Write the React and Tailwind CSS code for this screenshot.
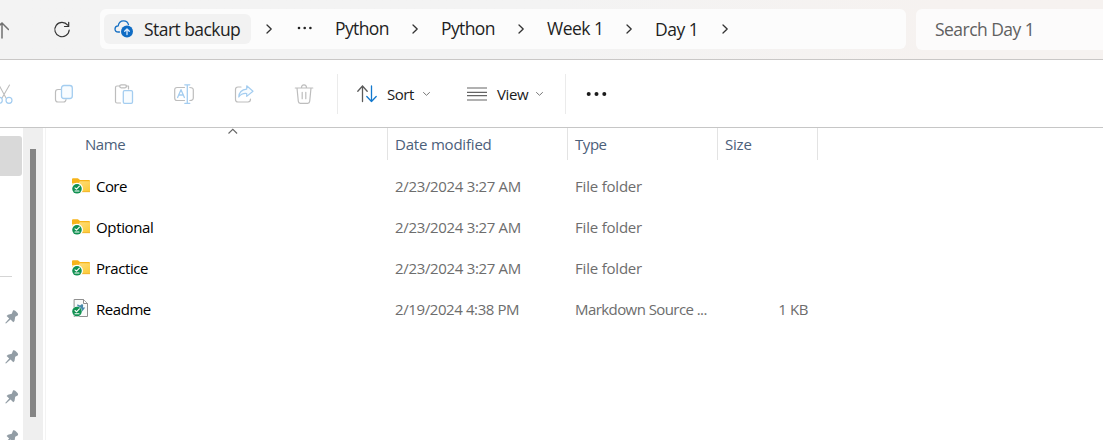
import React from "react";

const crumbs = [
  { label: "Python", width: "w-[77px]", track: "tracking-[-0.6px]" },
  { label: "Python", width: "w-[77px]", track: "tracking-[-0.6px]" },
  { label: "Week 1", width: "w-[79px]", track: "tracking-[-0.5px]" },
  { label: "Day 1", width: "w-[67px] pt-px", track: "tracking-[-0.5px]" },
];

const rows = [
  { name: "Core", date: "2/23/2024 3:27 AM", type: "File folder", size: "", nt: "tracking-[-0.55px]", dt: "tracking-[-0.33px]", tt: "tracking-[-0.2px]" },
  { name: "Optional", date: "2/23/2024 3:27 AM", type: "File folder", size: "", nt: "tracking-[-0.35px]", dt: "tracking-[-0.33px]", tt: "tracking-[-0.2px]" },
  { name: "Practice", date: "2/23/2024 3:27 AM", type: "File folder", size: "", nt: "tracking-[-0.42px]", dt: "tracking-[-0.33px]", tt: "tracking-[-0.2px]" },
  { name: "Readme", date: "2/19/2024 4:38 PM", type: "Markdown Source ...", size: "1 KB", file: true, nt: "tracking-[-0.45px]", dt: "tracking-[-0.4px]", tt: "tracking-[-0.57px]" },
];

function Svg({ w = 20, h = 20, className = "", children }) {
  return (
    <svg width={w} height={h} viewBox={`0 0 ${w} ${h}`} fill="none" strokeLinecap="round" strokeLinejoin="round" className={`block shrink-0 ${className}`}>
      {children}
    </svg>
  );
}

function ChevronRight() {
  return (
    <Svg w={8} h={12}>
      <path d="M1 2 5.200 6 1 10" stroke="#333" strokeWidth="1.300" />
    </Svg>
  );
}

function ChevronDown() {
  return (
    <Svg w={8} h={6}>
      <path d="M.5 1.500 3.500 4.300 6.500 1.500" stroke="#777" strokeWidth="1" />
    </Svg>
  );
}

function Badge() {
  return (
    <>
      <circle cx="5" cy="10.800" r="5.200" fill="#fff" />
      <circle cx="5" cy="10.800" r="4.800" fill="#129152" />
      <path d="M3 9.800 4.500 11.100 7.400 8.200M3 13h4" stroke="#fff" strokeWidth="1.100" />
    </>
  );
}

function FolderIcon() {
  return (
    <Svg w={18} h={16}>
      <defs>
        <linearGradient id="folder" x1="0" y1="0" x2="1" y2="1">
          <stop offset="0" stopColor="#ffe28a" />
          <stop offset="1" stopColor="#fbc833" />
        </linearGradient>
      </defs>
      <path d="M0 1.200Q0 .3 1 .3h4.600q.7 0 1.200.6L8 2.100h9q1 0 1 1V8H0z" fill="#f7b41a" />
      <path d="M0 5h6.400l1.500-1.700H18v10.200q0 .5-.7.5H.7Q0 14 0 13.300z" fill="url(#folder)" />
      <path d="M8 13.700h9.700" stroke="#efb02a" strokeWidth=".8" />
      <circle cx="5" cy="10.800" r="6" fill="#fff" />
      <Badge />
    </Svg>
  );
}

function MarkdownIcon() {
  return (
    <Svg w={18} h={19}>
      <path d="M2.500.5h9L15.500 4.500v13h-13z" fill="#fafafa" stroke="#909090" />
      <path d="M11.500.8v3.700h3.700" stroke="#909090" fill="#fff" />
      <path d="m5.500 5.200 2.500 1.300 2-1.400 1.200.9-.3 2.500h2.300l-3 4-2.500-3-2.700-.9z" fill="#4889aa" />
      <g transform="translate(0 1.700)">
        <Badge />
      </g>
    </Svg>
  );
}

function PinIcon() {
  return (
    <Svg w={14} h={14}>
      <path d="M8 .6c.7-.5 1.700-.3 2.500.4l2 2.100c.8.9.8 2 .1 2.500l-2.400 1.200-.7 4.300-1.200 1.200-2.800-2.900L1 13.400l-.8-.5 4-4.500-2.600-2.500L3 4.700l3.800-1z" fill="#929da5" />
    </Svg>
  );
}

function CloudIcon() {
  return (
    <Svg w={20} h={20}>
      <path d="M5.500 13H4.300C2.300 13 1 11.700 1 10c0-1.800 1.300-3 3.200-3.100C4.600 3.900 6.700 1.800 9.600 1.800c2.500 0 4.300 1.400 4.900 3.900" stroke="#1670c4" strokeWidth="1.300" />
      <circle cx="13" cy="12.600" r="6" fill="#0f6cc4" />
      <path d="M13 15.500v-5.400m-2.300 2.200L13 10l2.300 2.300" stroke="#dcecff" strokeWidth="1.300" />
    </Svg>
  );
}

function Tools() {
  const g = "#bdbdbd";
  const b = "#a4cdf0";
  return (
    <>
      <Svg className="-ml-[6px]">
        <path d="M5 1 12 14M15.500 1 8 14" stroke={g} strokeWidth="1.100" />
        <circle cx="5.300" cy="16.300" r="3" stroke={b} strokeWidth="1.200" />
        <circle cx="15" cy="16.300" r="3" stroke={b} strokeWidth="1.200" />
      </Svg>
      <Svg className="ml-10">
        <path d="M6.500 5.500H4Q1.500 5.500 1.500 8v7.500Q1.500 18 4 18h5.500q2 0 2.500-2.400" stroke={g} strokeWidth="1.200" />
        <rect x="7.500" y="1.500" width="10.800" height="13" rx="2.500" stroke={b} strokeWidth="1.300" fill="#f8fcff" />
      </Svg>
      <Svg className="ml-10">
        <path d="M5.800 2H3Q1.500 2 1.500 3.500v14Q1.500 19 3 19h3.500M12 2h2.500v3" stroke={g} strokeWidth="1.200" />
        <rect x="5.700" y=".8" width="6.800" height="3" rx="1.500" stroke={g} strokeWidth="1.200" />
        <rect x="9.300" y="6.700" width="9.200" height="12.600" rx="1.300" stroke={b} strokeWidth="1.300" fill="#f8fcff" />
      </Svg>
      <Svg className="ml-10">
        <path d="M10.500 3.500H3Q.7 3.500.7 6v8q0 2.500 2.300 2.500h7.500M15.800 3.500q3.500 0 3.500 2.500v8q0 2.500-3.500 2.500" stroke={g} strokeWidth="1.200" />
        <path d="M3.600 13.500 7 5.700l3.400 7.800M4.600 11h4.800M13.300 1v18.200M10.800.8h5M10.800 19.300h5" stroke={b} strokeWidth="1.300" />
      </Svg>
      <Svg className="ml-10">
        <path d="M7 3H4Q1.500 3 1.500 5.500v10Q1.500 18 4 18h10q2.500 0 2.500-3" stroke={g} strokeWidth="1.200" />
        <path d="M12.700 1.800 19 7.200l-6.300 5.200V9.500C8.800 9.200 6.600 10.300 4.800 13c.2-4.400 3.200-7.500 7.900-7.900z" stroke={b} strokeWidth="1.200" fill="#f8fcff" />
      </Svg>
      <Svg className="ml-10">
        <path d="M1.300 4h17.500M3 4l1.300 13.300Q4.500 19.300 6.300 19.300h7.400q1.800 0 2-2L17 4M7.500 3.700Q7.500.8 10 .8t2.500 2.900M8.200 8.300v6.400M11.800 8.300v6.400" stroke={g} strokeWidth="1.200" />
      </Svg>
    </>
  );
}

function MoreDots({ small }) {
  return small ? (
    <Svg w={16} h={4}>
      <circle cx="2" cy="2" r="1.300" fill="#222" />
      <circle cx="7.700" cy="2" r="1.300" fill="#222" />
      <circle cx="13.400" cy="2" r="1.300" fill="#222" />
    </Svg>
  ) : (
    <Svg w={22} h={6}>
      <circle cx="2.700" cy="3" r="2" fill="#1b1b1b" />
      <circle cx="10.500" cy="3" r="2" fill="#1b1b1b" />
      <circle cx="18.300" cy="3" r="2" fill="#1b1b1b" />
    </Svg>
  );
}

function AddressBar() {
  return (
    <header className="flex h-[60px] shrink-0 items-start border-b border-[#c9c7c6] bg-linear-to-r from-[#f3f3f3] from-50% to-[#f6f2f0] to-85% text-[17.5px] text-[#1f1f1f]">
      <div className="flex h-[59px] w-[100px] items-center">
        <Svg w={12} h={20} className="-ml-[3px]">
          <path d="M5 18V3M-2 9.500 5 3l6.500 6.500" stroke="#707070" strokeWidth="1.500" />
        </Svg>
        <Svg w={18} h={18} className="ml-[44px]">
          <path d="M14.700 4.100A7.200 7.200 0 1 0 16.200 9M15.700 1.300v4.200h-4.200" stroke="#333" strokeWidth="1.200" />
        </Svg>
      </div>
      <nav className="mt-[9px] flex h-10 w-[806px] shrink-0 items-center rounded-md bg-[#fcfcfc] pl-1">
        <div className="flex h-[30px] w-[147px] shrink-0 items-center rounded-md bg-[#f2f2f2] pl-[10px]">
          <CloudIcon />
          <span className="ml-[10px] tracking-[-0.56px] whitespace-nowrap">Start backup</span>
        </div>
        <div className="ml-[15px] flex w-[31px]"><ChevronRight /></div>
        <div className="flex w-[38px] pb-[3px]"><MoreDots small /></div>
        {crumbs.map((c, i) => (
          <div key={i} className="flex items-center">
            <span className={`${c.width} ${c.track} -mt-px whitespace-nowrap`}>{c.label}</span>
            <div className="w-[29px]"><ChevronRight /></div>
          </div>
        ))}
      </nav>
      <div className="mt-[9px] ml-[10px] flex h-[41px] flex-1 items-center rounded-l-md bg-[#fcfbfb] pl-[19px] text-[#606060]">
        <span className="tracking-[-0.54px] whitespace-nowrap">Search Day 1</span>
      </div>
    </header>
  );
}

function Toolbar() {
  return (
    <div className="flex h-[68px] shrink-0 items-center border-b border-[#c6c6c6] bg-white text-[15px] text-[#1b1b1b]">
      <Tools />
      <div className="ml-[23px] h-10 w-px bg-[#ebebeb]" />
      <Svg className="ml-[19px]">
        <path d="M5.500 17.500V2M.8 7.200 5.500 2l4.700 5.200" stroke="#5b5b5b" strokeWidth="1.300" />
        <path d="M14.500 2v15.500M9.800 12.500l4.700 5 4.700-5" stroke="#1379ce" strokeWidth="1.300" />
      </Svg>
      <span className="mt-[2px] ml-[10px] w-9 tracking-[-0.45px]">Sort</span>
      <ChevronDown />
      <Svg className="ml-[36px]">
        <path d="M0 4h20M0 8.300h20M0 11.700h20M0 16h20" stroke="#646464" strokeWidth="1.200" />
      </Svg>
      <span className="mt-[2px] ml-[10px] w-[39px] tracking-[-0.4px]">View</span>
      <ChevronDown />
      <div className="ml-[21px] h-10 w-px bg-[#ebebeb]" />
      <div className="ml-[20px] pt-px"><MoreDots /></div>
    </div>
  );
}

function Sidebar() {
  return (
    <aside className="flex w-[46px] shrink-0 border-r border-[#f3f3f3]">
      <div className="flex w-[23px] flex-col">
        <div className="mt-2 h-10 w-[22px] shrink-0 rounded-r-[3px] bg-[#d9d9d9]" />
        <div className="mt-[100px] h-px w-3 shrink-0 bg-[#d5d5d5]" />
        <div className="mt-[33px] flex flex-col gap-[26px] pl-[5px]">
          {[0, 1, 2, 3].map((i) => <PinIcon key={i} />)}
        </div>
      </div>
      <div className="w-5 bg-[#efefef] pt-[21px] pl-[7px]">
        <div className="h-[268px] w-[6px] bg-[#858585]" />
      </div>
    </aside>
  );
}

function FileList() {
  return (
    <main className="flex flex-1 flex-col text-[15px] whitespace-nowrap">
      <div className="flex h-8 items-center text-[#4c607a]">
        <div className="relative flex h-full w-[342px] items-center border-r border-[#e3e3e3] pl-[39px]">
          <span className="tracking-[-0.45px]">Name</span>
          <svg width="12" height="8" viewBox="0 0 12 8" fill="none" className="absolute top-0 left-[181px]">
            <path d="M1.500 5.500 5.800 1.300 10.100 5.500" stroke="#666" strokeWidth="1.100" />
          </svg>
        </div>
        <div className="flex h-full w-[180px] items-center border-r border-[#e3e3e3] pl-[7px] tracking-[-0.2px]">Date modified</div>
        <div className="flex h-full w-[150px] items-center border-r border-[#e3e3e3] pl-[7px] tracking-[-0.45px]">Type</div>
        <div className="flex h-full w-[100px] items-center border-r border-[#e3e3e3] pl-[7px] tracking-[-0.2px]">Size</div>
      </div>
      <div className="mt-[6px] flex flex-col text-[#6d6d6d]">
        {rows.map((r) => (
          <div key={r.name} className="flex h-[41px] items-center">
            <div className="flex w-[349px] items-center pl-[26px]">
              <div className={r.file ? "-mt-[3px]" : "-mt-px"}>{r.file ? <MarkdownIcon /> : <FolderIcon />}</div>
              <span className={`ml-[6px] text-black ${r.nt}`}>{r.name}</span>
            </div>
            <span className={`w-[180px] ${r.dt}`}>{r.date}</span>
            <span className={`w-[150px] ${r.tt}`}>{r.type}</span>
            <span className="w-[83px] text-right tracking-[-0.4px]">{r.size}</span>
          </div>
        ))}
      </div>
    </main>
  );
}

export default function App() {
  return (
    <div className="flex h-[440px] w-[1103px] flex-col overflow-hidden bg-white font-['Segoe_UI','Open_Sans',sans-serif]">
      <AddressBar />
      <Toolbar />
      <div className="flex min-h-0 flex-1 overflow-hidden">
        <Sidebar />
        <FileList />
      </div>
    </div>
  );
}
